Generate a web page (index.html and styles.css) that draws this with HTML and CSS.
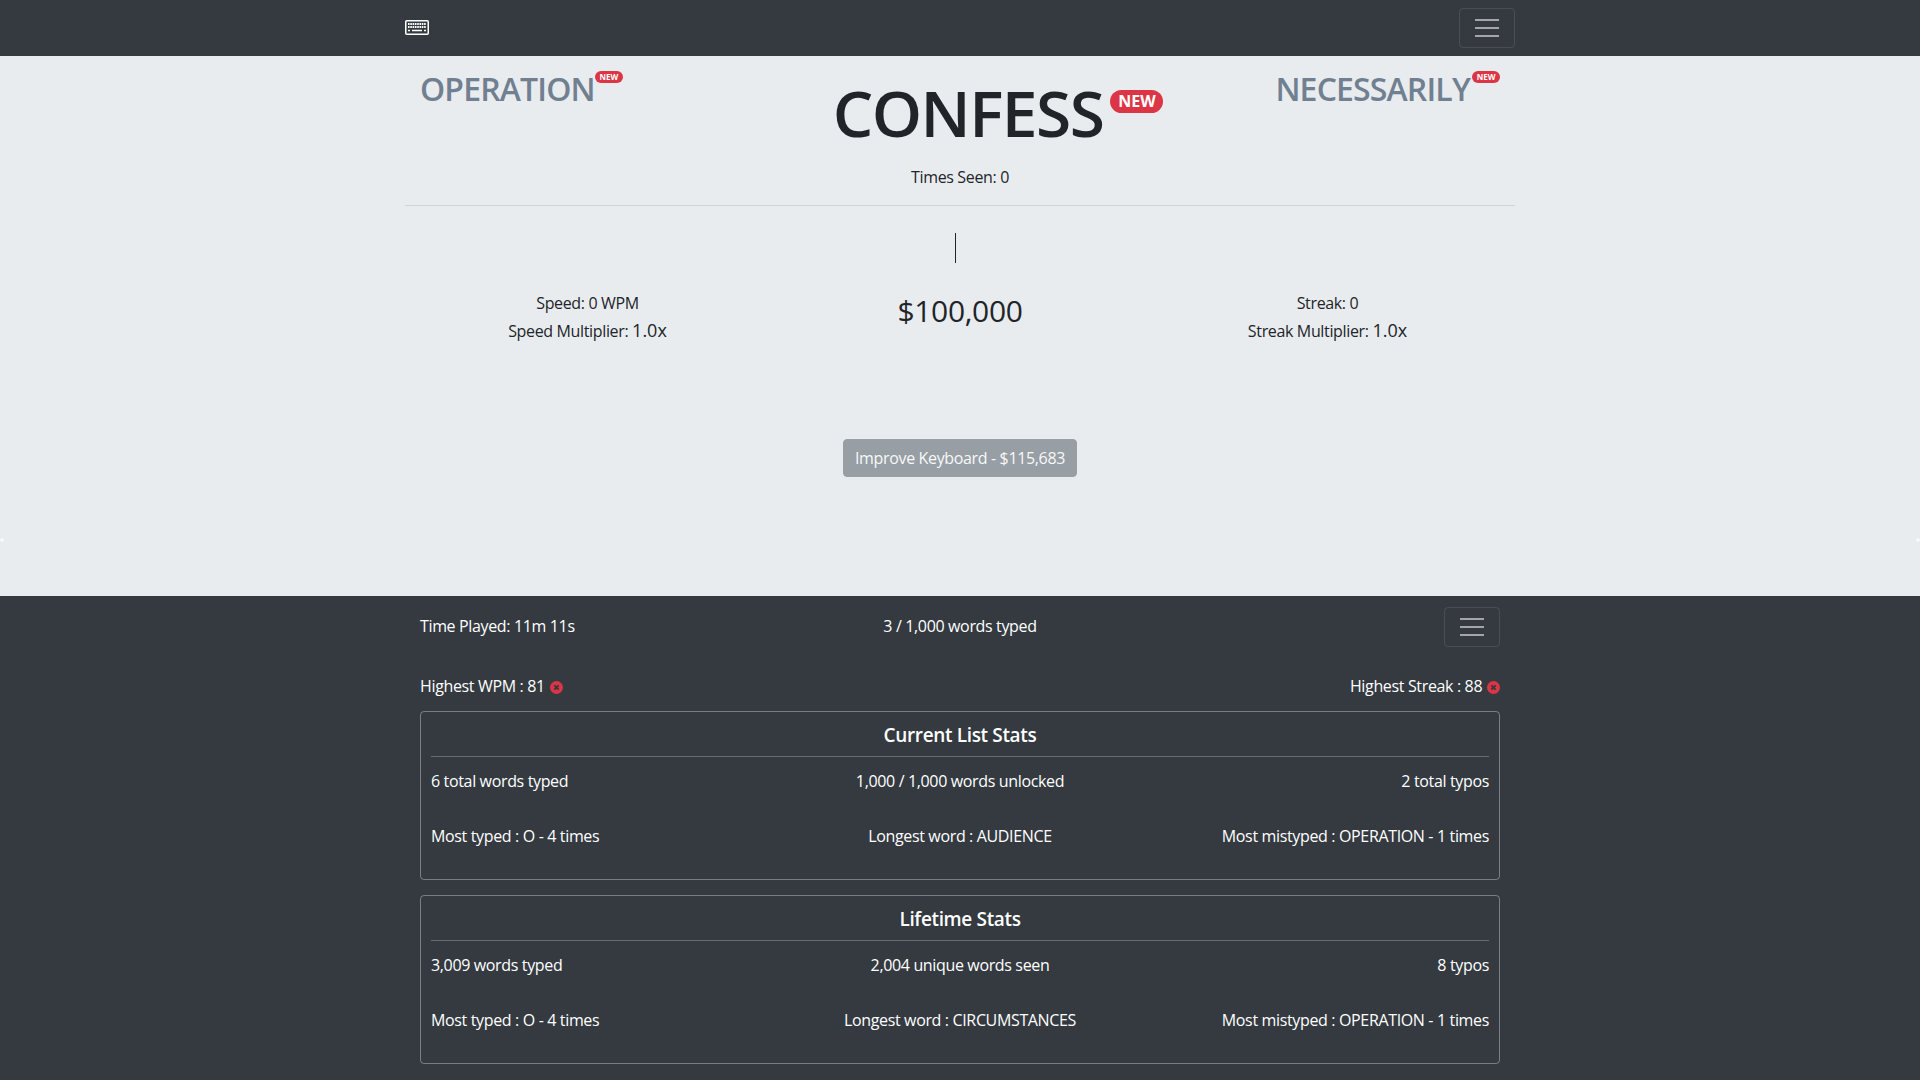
FILE: index.html
```html
<!DOCTYPE html>
<html lang="en">
<head>
    <meta charset="UTF-8">
    <title>Typing Game</title>
    <link rel="stylesheet" href="styles.css">
</head>
<body>
    <nav class="topbar">
        <div class="bar-inner">
            <svg class="brand" width="24" height="15" viewBox="0 0 24 15">
                <rect x="0.75" y="0.75" width="22.5" height="13.5" rx="1" fill="none" stroke="#fff" stroke-width="1.5"/>
                <path d="M3 4h18M3 7h18" fill="none" stroke="#fff" stroke-width="1.8" stroke-dasharray="1.6 .7"/>
                <path d="M3 10.5h2M7 10.5h10M19 10.5h2" stroke="#fff" stroke-width="1.6"/>
            </svg>
            <button class="toggler"><span></span><span></span><span></span></button>
        </div>
    </nav>

    <main class="game">
        <div class="game-inner">
            <div class="words">
                <div class="side-word">OPERATION<span class="badge badge-sm">NEW</span></div>
                <div class="main-word">CONFESS<span class="badge badge-lg">NEW</span></div>
                <div class="side-word">NECESSARILY<span class="badge badge-sm">NEW</span></div>
            </div>
            <p class="seen">Times Seen: 0</p>
            <hr class="rule">
            <div class="caret-row"><span class="caret"></span></div>
            <div class="score-row">
                <div class="score-col">
                    <div>Speed: 0 WPM</div>
                    <div class="multi">Speed Multiplier: <span class="big">1.0x</span></div>
                </div>
                <div class="money">$100,000</div>
                <div class="score-col">
                    <div>Streak: 0</div>
                    <div class="multi">Streak Multiplier: <span class="big">1.0x</span></div>
                </div>
            </div>
            <div class="upgrade-row"><button class="upgrade">Improve Keyboard - $115,683</button></div>
        </div>
        <span class="edge-glow edge-left"></span>
        <span class="edge-glow edge-right"></span>
    </main>

    <section class="stats">
        <div class="stats-inner">
            <div class="stats-head">
                <span class="head-text">Time Played: 11m 11s</span>
                <span class="head-text head-mid">3 / 1,000 words typed</span>
                <button class="toggler"><span></span><span></span><span></span></button>
            </div>
            <div class="highs">
                <span>Highest WPM : 81 <svg class="x-icon" viewBox="0 0 12 12"><circle cx="6" cy="6" r="6" fill="#dc3545"/><path d="M4 4l4 4M8 4l-4 4" stroke="#343a40" stroke-width="1.8"/></svg></span>
                <span>Highest Streak : 88 <svg class="x-icon" viewBox="0 0 12 12"><circle cx="6" cy="6" r="6" fill="#dc3545"/><path d="M4 4l4 4M8 4l-4 4" stroke="#343a40" stroke-width="1.8"/></svg></span>
            </div>
            <div class="card">
                <h5 class="card-title">Current List Stats</h5>
                <div class="card-row">
                    <span>6 total words typed</span>
                    <span>1,000 / 1,000 words unlocked</span>
                    <span>2 total typos</span>
                </div>
                <div class="card-row">
                    <span>Most typed : O - 4 times</span>
                    <span>Longest word : AUDIENCE</span>
                    <span>Most mistyped : OPERATION - 1 times</span>
                </div>
            </div>
            <div class="card">
                <h5 class="card-title">Lifetime Stats</h5>
                <div class="card-row">
                    <span>3,009 words typed</span>
                    <span>2,004 unique words seen</span>
                    <span>8 typos</span>
                </div>
                <div class="card-row">
                    <span>Most typed : O - 4 times</span>
                    <span>Longest word : CIRCUMSTANCES</span>
                    <span>Most mistyped : OPERATION - 1 times</span>
                </div>
            </div>
        </div>
    </section>
</body>
</html>
```

FILE: styles.css
```css
html, body {
    height: 100%;
    overflow: hidden;
}
body {
    margin: 0;
    font-family: "Open Sans", "Noto Sans", Arial, sans-serif;
    font-size: 16px;
    line-height: 24px;
    letter-spacing: -0.35px;
    color: #212529;
    background-color: #343a40;
}
.topbar {
    height: 56px;
    background-color: #343a40;
}
.bar-inner {
    width: 1110px;
    height: 100%;
    margin: 0 auto;
    display: flex;
    align-items: center;
    justify-content: space-between;
}
.brand {
    display: block;
    margin-top: -1px;
}
.toggler {
    display: flex;
    flex-direction: column;
    justify-content: center;
    gap: 6px;
    width: 56px;
    height: 40px;
    padding: 0 15px;
    background: none;
    border: 1px solid rgba(255, 255, 255, 0.1);
    border-radius: 4px;
}
.toggler span {
    display: block;
    height: 2px;
    background-color: rgba(255, 255, 255, 0.55);
}

.game {
    position: relative;
    height: 540px;
    background-color: #e9ecef;
}
.game-inner {
    width: 1110px;
    margin: 0 auto;
}
.words {
    display: flex;
    justify-content: space-between;
    padding: 0 15px;
}
.side-word {
    width: 300px;
    padding-top: 14px;
    font-size: 32px;
    line-height: 38px;
    font-weight: 600;
    letter-spacing: -0.85px;
    color: #708090;
}
.side-word:last-child {
    text-align: right;
}
.side-word:last-child .badge-sm {
    margin-left: 2px;
}
.main-word {
    padding-top: 21px;
    padding-left: 76px;
    font-size: 64px;
    line-height: 72px;
    font-weight: 600;
    letter-spacing: -1.5px;
    color: #212529;
}
.badge {
    display: inline-block;
    vertical-align: top;
    background-color: #dc3545;
    color: #fff;
    font-weight: 700;
    letter-spacing: 0;
    border-radius: 10rem;
    text-align: center;
}
.badge-sm {
    width: 28px;
    height: 12px;
    margin-left: 0;
    margin-top: 1px;
    font-size: 8px;
    line-height: 12px;
}
.badge-lg {
    width: 53px;
    height: 23px;
    margin-left: 7px;
    margin-top: 13px;
    font-size: 16px;
    line-height: 23px;
}
.seen {
    margin: 0;
    padding-top: 16px;
    text-align: center;
    line-height: 24px;
}
.rule {
    margin: 16px 0 0;
    border: 0;
    border-top: 1px solid rgba(0, 0, 0, 0.1);
}
.caret-row {
    display: flex;
    justify-content: center;
    padding-top: 27px;
    height: 30px;
}
.caret {
    display: block;
    width: 1px;
    height: 30px;
    margin-left: -10px;
    background-color: #212529;
}
.score-row {
    display: grid;
    grid-template-columns: 370px 370px 370px;
    padding-top: 28px;
    text-align: center;
}
.score-col {
    height: 56px;
    padding-right: 5px;
}
.multi {
    margin-top: 3px;
}
.big {
    font-size: 18px;
    letter-spacing: 0;
}
.money {
    padding-top: 1px;
    font-size: 30px;
    line-height: 38px;
    font-weight: 500;
}
.upgrade-row {
    display: flex;
    justify-content: center;
    padding-top: 92px;
}
.upgrade {
    height: 38px;
    padding: 0 11px;
    font-family: inherit;
    font-size: 16px;
    letter-spacing: -0.35px;
    color: #fff;
    background-color: #6c757d;
    border: 1px solid #6c757d;
    border-radius: 4px;
    opacity: 0.65;
}
.edge-glow {
    position: absolute;
    top: 482px;
    width: 4px;
    height: 4px;
    background: radial-gradient(circle, #fff, rgba(255, 255, 255, 0));
}
.edge-left {
    left: 0;
}
.edge-right {
    right: 0;
}

.stats {
    color: #fff;
}
.stats-inner {
    width: 1080px;
    margin: 0 auto;
}
.stats-head {
    display: grid;
    grid-template-columns: 1fr 1fr 1fr;
    align-items: center;
    padding-top: 11px;
}
.stats-head .toggler {
    justify-self: end;
}
.head-text {
    margin-top: -2px;
}
.head-mid {
    text-align: center;
}
.highs {
    display: flex;
    justify-content: space-between;
    padding-top: 27px;
}
.x-icon {
    width: 13px;
    height: 13px;
    margin-left: 1px;
    vertical-align: -2px;
}
.card {
    height: 169px;
    box-sizing: border-box;
    margin-top: 13px;
    margin-bottom: 15px;
    padding: 10px;
    border: 1px solid rgba(255, 255, 255, 0.35);
    border-radius: 4px;
}
.card-title {
    margin: 0;
    padding-bottom: 8px;
    border-bottom: 1px solid rgba(255, 255, 255, 0.25);
    text-align: center;
    font-size: 19px;
    font-weight: 600;
    line-height: 26px;
}
.card-row {
    display: grid;
    grid-template-columns: 1fr 1fr 1fr;
    height: 55px;
    padding-top: 12px;
    box-sizing: border-box;
}
.card-row span:nth-child(2) {
    text-align: center;
}
.card-row span:nth-child(3) {
    text-align: right;
}
```
